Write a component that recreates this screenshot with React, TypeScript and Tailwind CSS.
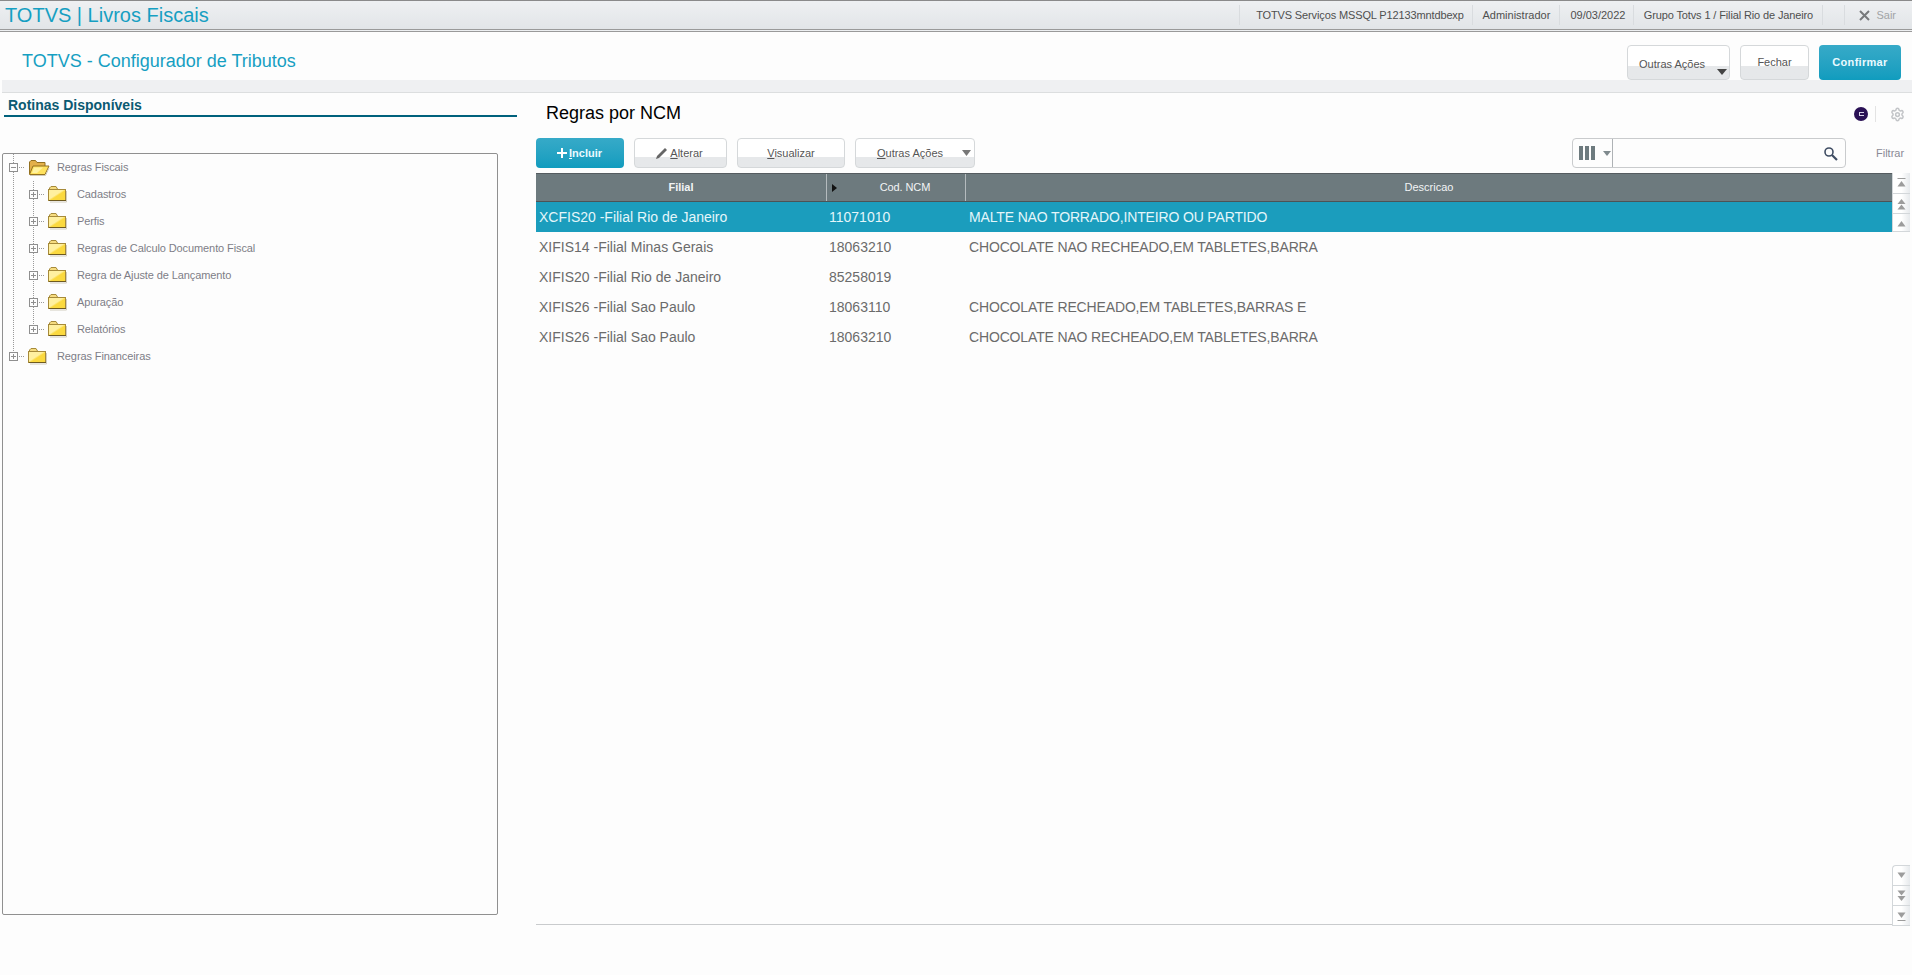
import React from "react";
import { Settings } from "lucide-react";

const Folder = ({ open = false }: { open?: boolean }) =>
  open ? (
    <svg width="22" height="18" viewBox="0 0 22 18" className="shrink-0">
      <path d="M1.5 15V3L3 1.5h4.5L9 3.5h8V7" fill="#e3b04a" stroke="#93701f" />
      <path d="M1.5 15.5L5 7h16l-4 8.5z" fill="#ffe25e" stroke="#93701f" />
      <path d="M4 14l2-5.5h9L9 14z" fill="#fff2a0" />
      <path d="M2 16.5h15.5L21 9" stroke="#cfc9b8" fill="none" />
    </svg>
  ) : (
    <svg width="19" height="17" viewBox="0 0 19 17" className="shrink-0">
      <defs>
        <linearGradient id="fold" x1="0" y1="0" x2="1" y2="1">
          <stop offset="0.45" stopColor="#fff0a0" />
          <stop offset="0.55" stopColor="#fbd93f" />
        </linearGradient>
      </defs>
      <path d="M1.5 5V2L3 .5h5L9.5 3" fill="#f6dc80" stroke="#a68a3a" />
      <rect x="0.5" y="3.5" width="17" height="11" fill="url(#fold)" stroke="#a68a3a" />
      <path d="M1 14.5h17" stroke="#6e5a20" />
      <path d="M2 16h16.5M18.5 5v11" stroke="#d2cdbf" />
    </svg>
  );

const Expander = ({ minus = false }: { minus?: boolean }) => (
  <svg width="15" height="9" viewBox="0 0 15 9" className="shrink-0">
    <rect x="0.5" y="0.5" width="8" height="8" fill="#fdfdfd" stroke="#8f8f8f" />
    <path d="M2 4.5h5" stroke="#8f8f8f" />
    {!minus && <path d="M4.5 2v5" stroke="#8f8f8f" />}
    <path d="M10 4.5h5" stroke="#9a9a9a" strokeDasharray="1 1" />
  </svg>
);

const TreeRow = ({ label, open, child }: { label: string; open?: boolean; child?: boolean }) => (
  <div className={`h-[27px] flex items-center ${child ? "pl-[26px]" : "pl-[6px]"}`}>
    <Expander minus={open} />
    <div className="ml-[4px] w-[29px] shrink-0">
      <Folder open={open} />
    </div>
    <span className="text-[11px] tracking-[-0.1px] text-[#7d7d87]">{label}</span>
  </div>
);

const Sep = () => <div className="w-px h-[20px] bg-[#d9dcdf] shrink-0" />;

const Tri = ({ down = false, bar = false, double = false }: { down?: boolean; bar?: boolean; double?: boolean }) => (
  <svg width="9" height="12" viewBox="0 0 9 12">
    <g fill="#9c9c9c" transform={down ? "rotate(180 4.5 6)" : undefined}>
      {bar && <rect x="0.5" y="1" width="8" height="1" />}
      {double ? (
        <>
          <path d="M4.5 1L8.5 6H.5z" />
          <path d="M4.5 6.5L8.5 11.5H.5z" />
        </>
      ) : (
        <path d="M4.5 4L8.5 9.5H.5z" />
      )}
    </g>
  </svg>
);

const ScrollBtn = ({ children, h, top }: { children: React.ReactNode; h: string; top?: boolean }) => (
  <div
    className={`${h} flex items-center justify-center border-l border-b border-[#d3d7da] bg-gradient-to-r from-white from-50% to-[#e6e9ec] ${top ? "rounded-tl-[4px] border-t" : ""}`}
  >
    {children}
  </div>
);

const ToolButton = ({ className, children }: { className: string; children: React.ReactNode }) => (
  <button
    className={`${className} h-[30px] rounded-[4px] border border-[#d5d8da] bg-gradient-to-b from-white from-[63%] to-[#e6e8ea] to-[63%] text-[11px] text-[#555] flex items-center justify-center relative`}
  >
    {children}
  </button>
);

const rows = [
  ["XCFIS20 -Filial Rio de Janeiro", "11071010", "MALTE NAO TORRADO,INTEIRO OU PARTIDO"],
  ["XIFIS14 -Filial Minas Gerais", "18063210", "CHOCOLATE NAO RECHEADO,EM TABLETES,BARRA"],
  ["XIFIS20 -Filial Rio de Janeiro", "85258019", ""],
  ["XIFIS26 -Filial Sao Paulo", "18063110", "CHOCOLATE RECHEADO,EM TABLETES,BARRAS E"],
  ["XIFIS26 -Filial Sao Paulo", "18063210", "CHOCOLATE NAO RECHEADO,EM TABLETES,BARRA"],
];

export default function App() {
  return (
    <div className="w-[1912px] h-[975px] overflow-hidden bg-[#fdfdfd] font-['Liberation_Sans',Arial,sans-serif]">
      {/* top bar */}
      <header className="h-[32px] border-t border-t-[#8a8a8a] border-b-[3px] border-double border-b-[#9a9a9a] bg-gradient-to-b from-[#eef0f2] to-[#e2e5e8] flex items-center">
        <h1 className="ml-[5px] text-[20px] text-[#169fc2] leading-none">TOTVS | Livros Fiscais</h1>
        <div className="ml-auto flex items-center text-[11px] text-[#4f4f4f]">
          <Sep />
          <span className="w-[232px] pl-[7px] text-center tracking-[-0.13px]">TOTVS Serviços MSSQL P12133mntdbexp</span>
          <Sep />
          <span className="w-[86px] text-center">Administrador</span>
          <Sep />
          <span className="w-[73px] pl-[2px] text-center">09/03/2022</span>
          <Sep />
          <span className="w-[188px] text-center tracking-[-0.13px]">Grupo Totvs 1 / Filial Rio de Janeiro</span>
          <Sep />
          <div className="w-[21px]" />
          <Sep />
          <svg width="11" height="11" viewBox="0 0 11 11" className="ml-[14px]">
            <path d="M1 1l9 9M10 1l-9 9" stroke="#77797b" strokeWidth="2" />
          </svg>
          <span className="ml-[6px] mr-[16px] text-[#a2a4a6]">Sair</span>
        </div>
      </header>

      {/* page header */}
      <div className="h-[48px] flex items-start justify-between">
        <h2 className="ml-[22px] mt-[19px] text-[18px] leading-[20px] text-[#169fc2]">TOTVS - Configurador de Tributos</h2>
        <div className="mt-[13px] mr-[11px] flex gap-[10px]">
          <button className="w-[103px] h-[35px] rounded-[4px] border border-[#d5d8da] bg-gradient-to-b from-white from-[62%] to-[#e6e8ea] to-[62%] text-[11px] text-[#555] relative">
            <span className="absolute left-[11px] top-[10px]">Outras Ações</span>
            <svg width="10" height="6" viewBox="0 0 10 6" className="absolute right-[2px] top-[23px]">
              <path d="M0 0h10L5 6z" fill="#444" />
            </svg>
          </button>
          <button className="w-[69px] h-[35px] rounded-[4px] border border-[#d5d8da] bg-gradient-to-b from-white from-[62%] to-[#e6e8ea] to-[62%] text-[11px] text-[#555]">
            Fechar
          </button>
          <button className="w-[82px] h-[35px] rounded-[4px] bg-gradient-to-b from-[#36aac8] to-[#0f9cbe] text-[11px] font-bold tracking-[0.3px] text-[#eafaff]">
            Confirmar
          </button>
        </div>
      </div>
      <div className="ml-[2px] h-[13px] bg-[#eff0f2] border-b border-[#dcdedf]" />

      <main className="flex">
        {/* left panel */}
        <aside className="w-[536px] shrink-0">
          <div className="ml-[4px] w-[513px] h-[24px] border-b-2 border-[#00617c] pl-[4px] pt-[4px] text-[14px] leading-[16px] font-bold text-[#0b5a72]">
            Rotinas Disponíveis
          </div>
          <div className="relative mt-[36px] ml-[2px] w-[496px] h-[762px] border border-[#909090] rounded-[2px]">
            <div className="absolute left-[10px] top-0 h-[203px] border-l border-dotted border-[#9a9a9a]" />
            <div className="absolute left-[30px] top-[27px] h-[149px] border-l border-dotted border-[#9a9a9a]" />
            <div className="relative">
              <TreeRow label="Regras Fiscais" open />
              <TreeRow label="Cadastros" child />
              <TreeRow label="Perfis" child />
              <TreeRow label="Regras de Calculo Documento Fiscal" child />
              <TreeRow label="Regra de Ajuste de Lançamento" child />
              <TreeRow label="Apuração" child />
              <TreeRow label="Relatórios" child />
              <TreeRow label="Regras Financeiras" />
            </div>
          </div>
        </aside>

        {/* right panel */}
        <section className="flex-1 min-w-0">
          <div className="h-[45px] relative pl-[10px] pt-[10px] text-[18px] leading-[20px] text-black">
            Regras por NCM
            <div className="absolute right-[7px] top-[13px] flex items-center">
              <div className="w-[14px] h-[14px] rounded-full bg-[#2a1155] flex items-center justify-center">
                <div className="w-[5px] h-[4px] border border-r-0 border-[#d8d4e8]" />
              </div>
              <div className="ml-[7px] w-px h-[16px] bg-[#e3e3e3]" />
              <Settings size={15} strokeWidth={2.4} color="#c3c5c8" className="ml-[14px]" />
            </div>
          </div>

          <div className="h-[30px] flex items-center">
            <button className="w-[88px] h-[30px] rounded-[4px] bg-gradient-to-b from-[#36aac8] to-[#0f9cbe] text-[11px] font-bold text-[#eafaff] flex items-center justify-center pr-[2px]">
              <svg width="12" height="12" viewBox="0 0 12 12" className="mr-[1px]">
                <path d="M6 1v10M1 6h10" stroke="#fff" strokeWidth="2" />
              </svg>
              <span><u>I</u>ncluir</span>
            </button>
            <ToolButton className="ml-[10px] w-[93px] pr-[3px]">
              <svg width="14" height="14" viewBox="0 0 14 14" className="mr-[1px]">
                <path d="M1 13l1-3 8-8 2 2-8 8z" fill="#666" />
              </svg>
              <span><u>A</u>lterar</span>
            </ToolButton>
            <ToolButton className="ml-[10px] w-[108px]">
              <span><u>V</u>isualizar</span>
            </ToolButton>
            <ToolButton className="ml-[10px] w-[120px] pr-[10px]">
              <span><u>O</u>utras Ações</span>
              <svg width="9" height="6" viewBox="0 0 9 6" className="absolute right-[3px] top-[11px]">
                <path d="M0 0h9L4.5 6z" fill="#777" />
              </svg>
            </ToolButton>
            <div className="ml-[597px] w-[274px] h-[30px] rounded-[4px] border border-[#c9cbcd] flex items-center bg-[#fdfdfd]">
              <div className="w-[40px] h-full shrink-0 rounded-l-[4px] border-r border-[#aeb2b5] flex items-center pl-[6px]">
                <div className="flex gap-[2px]">
                  <div className="w-[4px] h-[14px] bg-[#6d7a7e]" />
                  <div className="w-[4px] h-[14px] bg-[#6d7a7e]" />
                  <div className="w-[4px] h-[14px] bg-[#6d7a7e]" />
                </div>
                <svg width="8" height="5" viewBox="0 0 8 5" className="ml-[8px]">
                  <path d="M0 0h8L4 5z" fill="#7f8a8e" />
                </svg>
              </div>
              <svg width="15" height="15" viewBox="0 0 15 15" className="ml-auto mr-[7px]">
                <circle cx="6" cy="6" r="4" fill="none" stroke="#3f4d63" strokeWidth="1.6" />
                <path d="M9 9l5 5" stroke="#3f4d63" strokeWidth="2.2" />
              </svg>
            </div>
            <span className="ml-[30px] text-[11px] text-[#8a8a96]">Filtrar</span>
          </div>

          <div className="mt-[5px] flex h-[752px]">
            <div className="w-[1356px] border-b border-[#c9cbcd]">
              <div className="h-[29px] flex items-center bg-[#6d7a7e] border-t border-[#555c60] border-b border-b-[#4c5356] text-[11px] text-[#f2f4f5]">
                <div className="w-[290px] text-center font-bold">Filial</div>
                <div className="w-[140px] h-full border-l border-r border-[#b5bbbe] flex items-center relative pl-[5px]">
                  <svg width="5" height="8" viewBox="0 0 5 8">
                    <path d="M0 0l5 4-5 4z" fill="#111" />
                  </svg>
                  <span className="absolute left-[8px] right-[-10px] text-center tracking-[-0.1px]">Cod. NCM</span>
                </div>
                <div className="flex-1 text-center">Descricao</div>
              </div>
              {rows.map((r, i) => (
                <div
                  key={i}
                  className={`h-[30px] flex items-center text-[14px] ${i === 0 ? "bg-[#1b9dbd] text-[#e4f6fa]" : "text-[#6b6b6b]"}`}
                >
                  <div className="w-[290px] pl-[3px]">{r[0]}</div>
                  <div className="w-[140px] pl-[3px]">{r[1]}</div>
                  <div className="flex-1 pl-[3px] tracking-[-0.15px]">{r[2]}</div>
                </div>
              ))}
            </div>
            <div className="w-[18px] flex flex-col justify-between">
              <div>
                <ScrollBtn h="h-[21px]"><Tri bar /></ScrollBtn>
                <ScrollBtn h="h-[20px]"><Tri double /></ScrollBtn>
                <ScrollBtn h="h-[18px]"><Tri /></ScrollBtn>
              </div>
              <div className="-mb-[1px]">
                <ScrollBtn h="h-[21px]" top><Tri down /></ScrollBtn>
                <ScrollBtn h="h-[20px]"><Tri down double /></ScrollBtn>
                <ScrollBtn h="h-[20px]"><Tri down bar /></ScrollBtn>
              </div>
            </div>
          </div>
        </section>
      </main>
    </div>
  );
}
